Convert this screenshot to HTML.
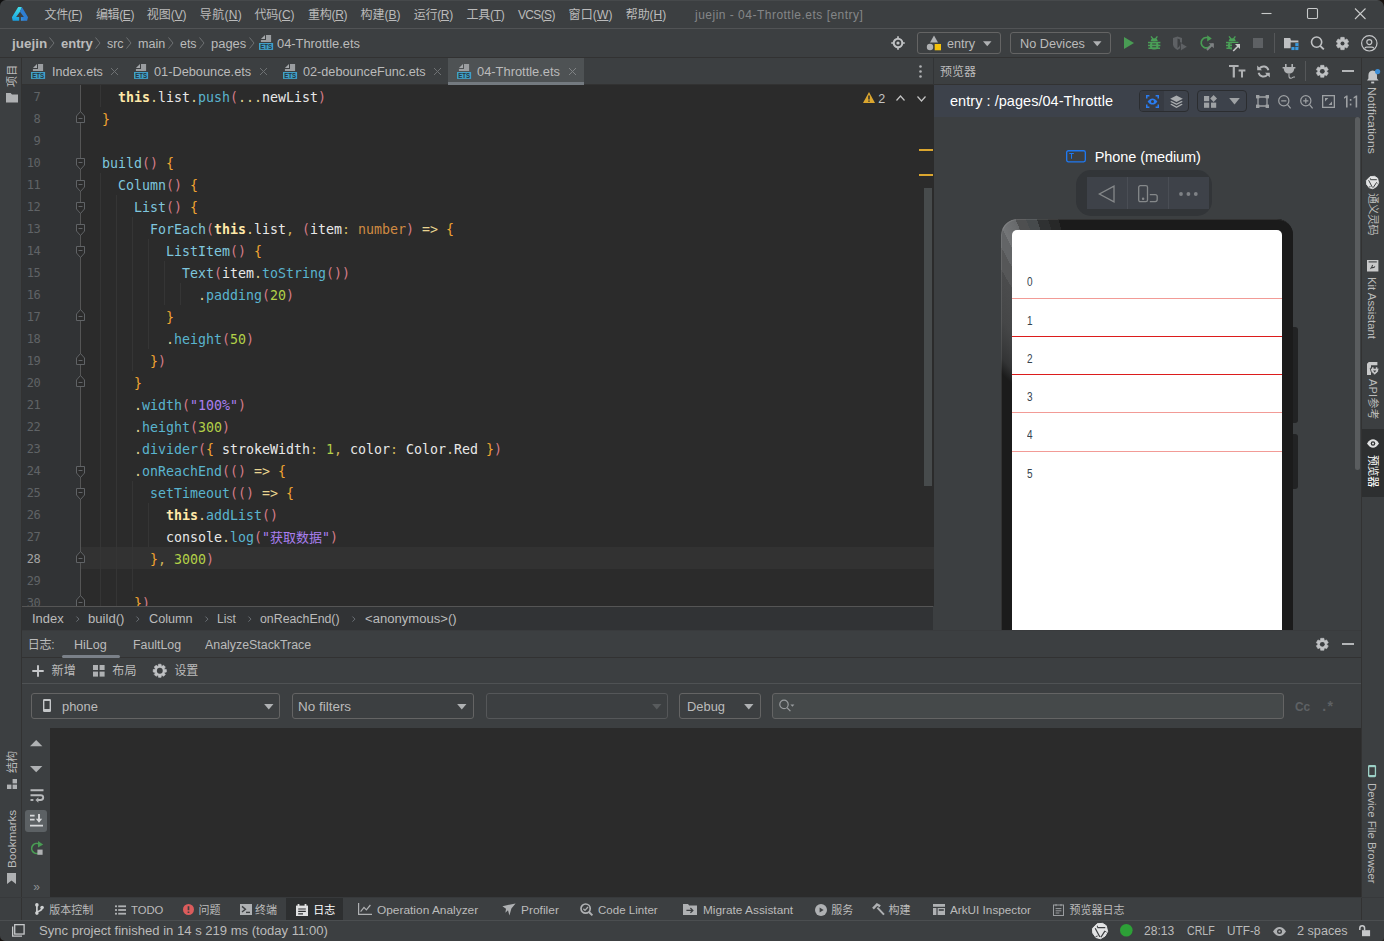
<!DOCTYPE html>
<html lang="zh-CN">
<head>
<meta charset="utf-8">
<title>juejin - 04-Throttle.ets [entry]</title>
<style>
*{box-sizing:border-box;margin:0;padding:0}
html,body{width:1384px;height:941px;overflow:hidden;background:#3c3f41}
body{position:relative;font-family:"Liberation Sans","Noto Sans CJK SC",sans-serif;font-size:12px;color:#bbbbbb;line-height:1}
.a{position:absolute}
.t{position:absolute;white-space:pre;line-height:16px;height:16px}
svg{position:absolute;overflow:visible}
u{text-decoration:underline;text-underline-offset:1px}
.ln{position:absolute;left:22px;width:18.4px;text-align:right;font-family:"DejaVu Sans Mono","Liberation Mono",monospace;font-size:12px;letter-spacing:-0.4px;line-height:22px;height:22px;color:#606366;white-space:pre}
.cl{position:absolute;left:86px;white-space:pre;font-family:"DejaVu Sans Mono","Liberation Mono","Noto Sans CJK SC",monospace;font-size:13.29px;line-height:22px;height:22px;color:#e8e8e8}
.k{color:#ffe8a8;font-weight:bold}.d{color:#ddd08c}.m{color:#5ab4cf}.p{color:#d47c88}.b{color:#f2a531}.n{color:#b2d048}.s{color:#a97ff0}.ty{color:#d08a42}.c{color:#7fc6de}.o{color:#cdb45a}.ar{color:#e8d590}
.combo{position:absolute;border:1px solid #646464;border-radius:3px;background:#3c3f41}
</style>
</head>
<body>
<div class="a" style="left:0px;top:28px;width:1384px;height:1px;background:#515355;"></div>
<div class="a" style="left:0px;top:57px;width:1384px;height:1px;background:#323232;"></div>
<div class="a" style="left:21px;top:58px;width:1px;height:862px;background:#323232;"></div>
<div class="a" style="left:1361px;top:58px;width:1px;height:862px;background:#323232;"></div>
<div class="a" style="left:22px;top:84px;width:912px;height:1px;background:#323232;"></div>
<div class="a" style="left:933px;top:58px;width:1px;height:27px;background:#323436;"></div>
<div class="a" style="left:22px;top:85px;width:912px;height:521px;background:#2b2b2b;"></div>
<div class="a" style="left:22px;top:85px;width:58px;height:521px;background:#313335;"></div>
<div class="a" style="left:22px;top:606px;width:911px;height:1px;background:#555555;"></div>
<div class="a" style="left:22px;top:630px;width:1339px;height:1px;background:#393b3d;"></div>
<div class="a" style="left:22px;top:657px;width:1339px;height:1px;background:#323232;"></div>
<div class="a" style="left:22px;top:683px;width:1339px;height:1px;background:#4f5254;"></div>
<div class="a" style="left:50px;top:728px;width:1311px;height:169px;background:#2b2b2b;"></div>
<div class="a" style="left:0px;top:897px;width:1384px;height:1px;background:#37393b;"></div>
<div class="a" style="left:0px;top:920px;width:1384px;height:1px;background:#4b4e50;"></div>
<svg style="left:0;top:0" width="40" height="28" viewBox="0 0 40 28"><defs><linearGradient id="lgA" x1="0" y1="0" x2="0" y2="1"><stop offset="0" stop-color="#43dfe8"/><stop offset="1" stop-color="#189fe0"/></linearGradient><linearGradient id="lgB" x1="1" y1="0" x2="0" y2="1"><stop offset="0" stop-color="#2c78cc"/><stop offset="0.7" stop-color="#2f80d6"/><stop offset="1" stop-color="#3ba0ec"/></linearGradient></defs><path d="M18.2 6.9L21.9 6.9L20 11.8L16.1 17L19.2 17L19.2 20.8L12.7 20.8L11.9 17.3Z" fill="url(#lgA)"/><path d="M21.9 6.9L28 17.3L27.1 20.8L20.9 20.8L20.9 17L23.9 17L20 11.8Z" fill="url(#lgB)"/></svg>
<span class="t" style="left:44.5px;top:6.5px;font-size:12px;letter-spacing:-0.33px;">文件(<u>F</u>)</span>
<span class="t" style="left:96px;top:6.5px;font-size:12px;letter-spacing:-0.38px;">编辑(<u>E</u>)</span>
<span class="t" style="left:146.7px;top:6.5px;font-size:12px;letter-spacing:-0.02px;">视图(<u>V</u>)</span>
<span class="t" style="left:199.8px;top:6.5px;font-size:12px;letter-spacing:0.33px;">导航(<u>N</u>)</span>
<span class="t" style="left:254.4px;top:6.5px;font-size:12px;letter-spacing:-0.17px;">代码(<u>C</u>)</span>
<span class="t" style="left:308px;top:6.5px;font-size:12px;letter-spacing:-0.29px;">重构(<u>R</u>)</span>
<span class="t" style="left:360.6px;top:6.5px;font-size:12px;">构建(<u>B</u>)</span>
<span class="t" style="left:413.8px;top:6.5px;font-size:12px;letter-spacing:-0.32px;">运行(<u>R</u>)</span>
<span class="t" style="left:466.4px;top:6.5px;font-size:12px;letter-spacing:-0.23px;">工具(<u>T</u>)</span>
<span class="t" style="left:518px;top:6.5px;font-size:12px;letter-spacing:-0.65px;">VCS(<u>S</u>)</span>
<span class="t" style="left:568.5px;top:6.5px;font-size:12px;letter-spacing:0.17px;">窗口(<u>W</u>)</span>
<span class="t" style="left:625.7px;top:6.5px;font-size:12px;letter-spacing:-0.04px;">帮助(<u>H</u>)</span>
<span class="t" style="left:695px;top:6.5px;font-size:12px;letter-spacing:0.49px;color:#848688;">juejin - 04-Throttle.ets [entry]</span>
<svg style="left:1261px;top:8px" width="110" height="12" viewBox="0 0 110 12" fill="none" stroke="#c8caca" stroke-width="1.1"><path d="M0.5 5.5h10"/><rect x="46.5" y="0.5" width="10" height="10" rx="1.2"/><path d="M94 0.5l10.5 10.5M104.5 0.5L94 11"/></svg>
<span class="t" style="left:11.5px;top:35.5px;transform-origin:0 0;transform:scaleX(1.123);font-size:12px;font-weight:bold;">juejin</span>
<svg style="left:49px;top:37px" width="6" height="12" viewBox="0 0 6 12" fill="none" stroke="#6e7173" stroke-width="1"><path d="M0.5 0.5L5 6L0.5 11.5"/></svg>
<span class="t" style="left:61px;top:35.5px;transform-origin:0 0;transform:scaleX(1.0837);font-size:12px;font-weight:bold;">entry</span>
<svg style="left:95px;top:37px" width="6" height="12" viewBox="0 0 6 12" fill="none" stroke="#6e7173" stroke-width="1"><path d="M0.5 0.5L5 6L0.5 11.5"/></svg>
<span class="t" style="left:107px;top:35.5px;transform-origin:0 0;transform:scaleX(1.0375);font-size:12px;">src</span>
<svg style="left:126px;top:37px" width="6" height="12" viewBox="0 0 6 12" fill="none" stroke="#6e7173" stroke-width="1"><path d="M0.5 0.5L5 6L0.5 11.5"/></svg>
<span class="t" style="left:138.4px;top:35.5px;transform-origin:0 0;transform:scaleX(1.0455);font-size:12px;">main</span>
<svg style="left:168px;top:37px" width="6" height="12" viewBox="0 0 6 12" fill="none" stroke="#6e7173" stroke-width="1"><path d="M0.5 0.5L5 6L0.5 11.5"/></svg>
<span class="t" style="left:180px;top:35.5px;transform-origin:0 0;transform:scaleX(1.0365);font-size:12px;">ets</span>
<svg style="left:199px;top:37px" width="6" height="12" viewBox="0 0 6 12" fill="none" stroke="#6e7173" stroke-width="1"><path d="M0.5 0.5L5 6L0.5 11.5"/></svg>
<span class="t" style="left:211px;top:35.5px;transform-origin:0 0;transform:scaleX(1.0794);font-size:12px;">pages</span>
<svg style="left:248.5px;top:37px" width="6" height="12" viewBox="0 0 6 12" fill="none" stroke="#6e7173" stroke-width="1"><path d="M0.5 0.5L5 6L0.5 11.5"/></svg>
<svg style="left:259px;top:35px" width="14.1" height="15" viewBox="0 0 14.1 15"><path d="M7 0H12.1V7H1.9V5H7Z" fill="#9a9da0"/><path d="M6 0V4.1H1.9Z" fill="#a4a7aa"/><rect x="0" y="8" width="14.1" height="6.9" fill="#40a0c8"/><text x="1.2" y="13.8" font-family="Liberation Sans,sans-serif" font-size="6.3" font-weight="bold" fill="#263640" textLength="11.9" lengthAdjust="spacingAndGlyphs">ETS</text></svg>
<span class="t" style="left:277.3px;top:35.5px;transform-origin:0 0;transform:scaleX(1.0714);font-size:12px;">04-Throttle.ets</span>
<svg style="left:891px;top:36px" width="14" height="14" viewBox="0 0 14 14" fill="none" stroke="#bfc1c3"><circle cx="7" cy="7" r="4.3" stroke-width="2.1"/><circle cx="7" cy="7" r="1.6" fill="#bfc1c3" stroke="none"/><path d="M7 0.2v2.6M7 11.2V13.8M0.2 7h2.6M11.2 7H13.8" stroke-width="1.7"/></svg>
<div class="combo" style="left:917px;top:32px;width:84px;height:22px"></div>
<svg style="left:926px;top:35px" width="16" height="16" viewBox="0 0 16 16"><path d="M8 0.4L12 7.4H4Z" fill="#afb1b3"/><circle cx="4" cy="12" r="3.2" fill="#afb1b3"/><rect x="8.7" y="9" width="6.3" height="6.3" fill="#f4c20d"/></svg>
<span class="t" style="left:946.6px;top:35.5px;transform-origin:0 0;transform:scaleX(1.0529);font-size:12px;">entry</span>
<svg style="left:983px;top:40.8px" width="8.5" height="5.4" viewBox="0 0 10 6"><path d="M0 0H10L5 6Z" fill="#afb1b3"/></svg>
<div class="combo" style="left:1010px;top:32px;width:101px;height:22px"></div>
<span class="t" style="left:1019.6px;top:35.5px;transform-origin:0 0;transform:scaleX(1.0577);font-size:12px;">No Devices</span>
<svg style="left:1093px;top:40.8px" width="8.5" height="5.4" viewBox="0 0 10 6"><path d="M0 0H10L5 6Z" fill="#afb1b3"/></svg>
<svg style="left:1124px;top:37px" width="10" height="12" viewBox="0 0 10 12"><path d="M0 0L10 6L0 12Z" fill="#499c54"/></svg>
<svg style="left:1147.7px;top:36px" width="12.4" height="13.6" viewBox="0 0 12.4 13.6" fill="#4a9f57" stroke="none"><path d="M3 0.4L5 3M9.4 0.4L7.4 3" stroke="#4a9f57" stroke-width="1.3" fill="none"/><path d="M2.7 5.2A3.5 3 0 0 1 9.7 5.2Z"/><rect x="1.9" y="5.7" width="8.6" height="7.9" rx="3.6"/><rect x="0" y="5.8" width="12.4" height="1.5"/><rect x="0" y="8.7" width="12.4" height="1.5"/><rect x="0.4" y="11.5" width="11.6" height="1.5"/><path d="M4.2 7.95H8.2M4.2 10.8H8.2" stroke="#3c3f41" stroke-width="1.1" fill="none"/></svg>
<svg style="left:1172px;top:36px" width="16" height="15" viewBox="0 0 16 15"><path d="M1 2L5.5 0.5L10 2V8.5C10 11 7.5 13 5.5 14C3.5 13 1 11 1 8.5Z" fill="#5e6164"/><path d="M5.5 2.5L8 3.4V8.5C8 10 6.8 11.2 5.5 12Z" fill="#3c3f41"/><path d="M8.5 6.5L15.5 10.7L8.5 15Z" fill="#5e6164" stroke="#3c3f41" stroke-width="0.8"/></svg>
<svg style="left:1198.5px;top:35px" width="16" height="16" viewBox="0 0 16 16" fill="none"><path d="M11.2 4.2A5.2 5.2 0 1 0 12.2 9.6" stroke="#499c54" stroke-width="1.7"/><path d="M8.2 0.2L12.8 3.6L8.2 6.6Z" fill="#499c54"/><path d="M8 15L14 9" stroke="#7e8183" stroke-width="1.8"/><path d="M9.8 8.2H14.8V13.2Z" fill="#7e8183"/></svg>
<svg style="left:1225.8px;top:36px" width="12.4" height="13.6" viewBox="0 0 12.4 13.6" fill="#4a9f57" stroke="none"><path d="M3 0.4L5 3M9.4 0.4L7.4 3" stroke="#4a9f57" stroke-width="1.3" fill="none"/><path d="M2.7 5.2A3.5 3 0 0 1 9.7 5.2Z"/><rect x="1.9" y="5.7" width="8.6" height="7.9" rx="3.6"/><rect x="0" y="5.8" width="12.4" height="1.5"/><rect x="0" y="8.7" width="12.4" height="1.5"/><rect x="0.4" y="11.5" width="11.6" height="1.5"/><path d="M4.2 7.95H8.2M4.2 10.8H8.2" stroke="#3c3f41" stroke-width="1.1" fill="none"/></svg>
<svg style="left:1232px;top:43px" width="9" height="9" viewBox="0 0 9 9"><rect x="0" y="0" width="9" height="9" fill="#3c3f41"/><path d="M1.2 8L7 2.2" stroke="#c8c9ca" stroke-width="1.6"/><path d="M3 1H8V6Z" fill="#c8c9ca"/></svg>
<div class="a" style="left:1253px;top:38px;width:10.4px;height:10.2px;background:#5e6164;"></div>
<div class="a" style="left:1274px;top:33px;width:1px;height:20px;background:#555759;"></div>
<svg style="left:1283.8px;top:37.8px" width="14.6" height="12.2" viewBox="0 0 14.6 12.2"><path d="M0 0H6.2L7 2.4H14.4V10.2H0Z" fill="#bfc1c3"/><rect x="6.6" y="4.4" width="8" height="8" fill="#3c3f41"/><rect x="11.3" y="5.1" width="3.1" height="3.1" fill="#3a9ae0"/><rect x="7.4" y="9" width="3.1" height="3.1" fill="#3a9ae0"/><rect x="11.3" y="9" width="3.1" height="3.1" fill="#3a9ae0"/></svg>
<svg style="left:1310px;top:36px" width="15" height="15" viewBox="0 0 15 15" fill="none" stroke="#bfc1c3"><circle cx="6.6" cy="6.1" r="5.1" stroke-width="1.6"/><path d="M10.2 9.8L13.8 13.4" stroke-width="1.9"/></svg>
<svg style="left:1336.4px;top:36.6px" width="13" height="13" viewBox="-6.5 -6.5 13 13"><path d="M-1.92 -4.29L-1.71 -6.17L1.71 -6.17L1.92 -4.29L2.76 -3.81L4.49 -4.56L6.20 -1.61L4.67 -0.49L4.67 0.49L6.20 1.61L4.49 4.56L2.76 3.81L1.92 4.29L1.71 6.17L-1.71 6.17L-1.92 4.29L-2.76 3.81L-4.49 4.56L-6.20 1.61L-4.67 0.49L-4.67 -0.49L-6.20 -1.61L-4.49 -4.56L-2.76 -3.81Z" fill="#bfc1c3" stroke="#bfc1c3" stroke-width="0.6" stroke-linejoin="round"/><circle r="2" fill="#3c3f41"/></svg>
<svg style="left:1360.6px;top:34.6px" width="16.6" height="16.6" viewBox="0 0 16.6 16.6" fill="none" stroke="#c4c6c8" stroke-width="1.2"><circle cx="8.3" cy="8.3" r="7.7"/><circle cx="8.3" cy="7.1" r="2.5"/><path d="M3.9 13.6C3.9 12.4 4.8 12.1 5.6 12.1H11C11.8 12.1 12.7 12.4 12.7 13.6"/></svg>
<div class="a" style="left:448px;top:58px;width:136px;height:27px;background:#4e5254;"></div>
<div class="a" style="left:448px;top:82px;width:136px;height:3px;background:#747a80;"></div>
<svg style="left:31px;top:64px" width="14.1" height="15" viewBox="0 0 14.1 15"><path d="M7 0H12.1V7H1.9V5H7Z" fill="#9a9da0"/><path d="M6 0V4.1H1.9Z" fill="#a4a7aa"/><rect x="0" y="8" width="14.1" height="6.9" fill="#40a0c8"/><text x="1.2" y="13.8" font-family="Liberation Sans,sans-serif" font-size="6.3" font-weight="bold" fill="#263640" textLength="11.9" lengthAdjust="spacingAndGlyphs">ETS</text></svg>
<span class="t" style="left:51.7px;top:63.5px;transform-origin:0 0;transform:scaleX(1.0451);font-size:12px;">Index.ets</span>
<svg style="left:111px;top:68px" width="7" height="7" viewBox="0 0 7 7" stroke="#6e7173" stroke-width="1" fill="none"><path d="M0 0L7 7M7 0L0 7"/></svg>
<svg style="left:134px;top:64px" width="14.1" height="15" viewBox="0 0 14.1 15"><path d="M7 0H12.1V7H1.9V5H7Z" fill="#9a9da0"/><path d="M6 0V4.1H1.9Z" fill="#a4a7aa"/><rect x="0" y="8" width="14.1" height="6.9" fill="#40a0c8"/><text x="1.2" y="13.8" font-family="Liberation Sans,sans-serif" font-size="6.3" font-weight="bold" fill="#263640" textLength="11.9" lengthAdjust="spacingAndGlyphs">ETS</text></svg>
<span class="t" style="left:154.2px;top:63.5px;transform-origin:0 0;transform:scaleX(1.0634);font-size:12px;">01-Debounce.ets</span>
<svg style="left:259.5px;top:68px" width="7" height="7" viewBox="0 0 7 7" stroke="#6e7173" stroke-width="1" fill="none"><path d="M0 0L7 7M7 0L0 7"/></svg>
<svg style="left:283px;top:64px" width="14.1" height="15" viewBox="0 0 14.1 15"><path d="M7 0H12.1V7H1.9V5H7Z" fill="#9a9da0"/><path d="M6 0V4.1H1.9Z" fill="#a4a7aa"/><rect x="0" y="8" width="14.1" height="6.9" fill="#40a0c8"/><text x="1.2" y="13.8" font-family="Liberation Sans,sans-serif" font-size="6.3" font-weight="bold" fill="#263640" textLength="11.9" lengthAdjust="spacingAndGlyphs">ETS</text></svg>
<span class="t" style="left:303.1px;top:63.5px;transform-origin:0 0;transform:scaleX(1.056);font-size:12px;">02-debounceFunc.ets</span>
<svg style="left:433.5px;top:68px" width="7" height="7" viewBox="0 0 7 7" stroke="#6e7173" stroke-width="1" fill="none"><path d="M0 0L7 7M7 0L0 7"/></svg>
<svg style="left:457px;top:64px" width="14.1" height="15" viewBox="0 0 14.1 15"><path d="M7 0H12.1V7H1.9V5H7Z" fill="#9a9da0"/><path d="M6 0V4.1H1.9Z" fill="#a4a7aa"/><rect x="0" y="8" width="14.1" height="6.9" fill="#40a0c8"/><text x="1.2" y="13.8" font-family="Liberation Sans,sans-serif" font-size="6.3" font-weight="bold" fill="#263640" textLength="11.9" lengthAdjust="spacingAndGlyphs">ETS</text></svg>
<span class="t" style="left:477.2px;top:63.5px;transform-origin:0 0;transform:scaleX(1.0727);font-size:12px;">04-Throttle.ets</span>
<svg style="left:569px;top:68px" width="7" height="7" viewBox="0 0 7 7" stroke="#7f8284" stroke-width="1" fill="none"><path d="M0 0L7 7M7 0L0 7"/></svg>
<svg style="left:919px;top:65px" width="3" height="13" viewBox="0 0 3 13" fill="#afb1b3"><circle cx="1.5" cy="1.5" r="1.3"/><circle cx="1.5" cy="6.5" r="1.3"/><circle cx="1.5" cy="11.5" r="1.3"/></svg>
<div class="a" style="left:0;top:0;width:934px;height:606px;overflow:hidden">
<div class="a" style="left:80px;top:547px;width:854px;height:22px;background:#323232;"></div>
<div class="a" style="left:80px;top:85px;width:1px;height:521px;background:#555555;"></div>
<div class="a" style="left:100px;top:85px;width:1px;height:22px;background:#353535;"></div>
<div class="a" style="left:100px;top:173px;width:1px;height:440px;background:#353535;"></div>
<div class="a" style="left:116px;top:195px;width:1px;height:418px;background:#353535;"></div>
<div class="a" style="left:132px;top:217px;width:1px;height:154px;background:#353535;"></div>
<div class="a" style="left:132px;top:481px;width:1px;height:110px;background:#353535;"></div>
<div class="a" style="left:148px;top:239px;width:1px;height:110px;background:#353535;"></div>
<div class="a" style="left:164px;top:261px;width:1px;height:44px;background:#353535;"></div>
<div class="a" style="left:180px;top:283px;width:1px;height:22px;background:#353535;"></div>
<div class="a" style="left:148px;top:503px;width:1px;height:44px;background:#353535;"></div>
<div class="ln" style="top:86px;color:#606366">7</div>
<div class="ln" style="top:108px;color:#606366">8</div>
<div class="ln" style="top:130px;color:#606366">9</div>
<div class="ln" style="top:152px;color:#606366">10</div>
<div class="ln" style="top:174px;color:#606366">11</div>
<div class="ln" style="top:196px;color:#606366">12</div>
<div class="ln" style="top:218px;color:#606366">13</div>
<div class="ln" style="top:240px;color:#606366">14</div>
<div class="ln" style="top:262px;color:#606366">15</div>
<div class="ln" style="top:284px;color:#606366">16</div>
<div class="ln" style="top:306px;color:#606366">17</div>
<div class="ln" style="top:328px;color:#606366">18</div>
<div class="ln" style="top:350px;color:#606366">19</div>
<div class="ln" style="top:372px;color:#606366">20</div>
<div class="ln" style="top:394px;color:#606366">21</div>
<div class="ln" style="top:416px;color:#606366">22</div>
<div class="ln" style="top:438px;color:#606366">23</div>
<div class="ln" style="top:460px;color:#606366">24</div>
<div class="ln" style="top:482px;color:#606366">25</div>
<div class="ln" style="top:504px;color:#606366">26</div>
<div class="ln" style="top:526px;color:#606366">27</div>
<div class="ln" style="top:548px;color:#a4a3a3">28</div>
<div class="ln" style="top:570px;color:#606366">29</div>
<div class="ln" style="top:592px;color:#606366">30</div>
<div class="cl" style="top:87px">    <span class="k">this</span><span class="d">.</span>list<span class="d">.</span><span class="m">push</span><span class="p">(</span><span class="d">...</span>newList<span class="p">)</span></div>
<div class="cl" style="top:109px">  <span class="b">}</span></div>
<div class="cl" style="top:153px">  <span class="c">build</span><span class="p">()</span> <span class="b">{</span></div>
<div class="cl" style="top:175px">    <span class="c">Column</span><span class="p">()</span> <span class="b">{</span></div>
<div class="cl" style="top:197px">      <span class="c">List</span><span class="p">()</span> <span class="b">{</span></div>
<div class="cl" style="top:219px">        <span class="c">ForEach</span><span class="p">(</span><span class="k">this</span><span class="d">.</span>list<span class="o">,</span> <span class="p">(</span>item<span class="o">:</span> <span class="ty">number</span><span class="p">)</span> <span class="ar">=&gt;</span> <span class="b">{</span></div>
<div class="cl" style="top:241px">          <span class="c">ListItem</span><span class="p">()</span> <span class="b">{</span></div>
<div class="cl" style="top:263px">            <span class="c">Text</span><span class="p">(</span>item<span class="d">.</span><span class="m">toString</span><span class="p">())</span></div>
<div class="cl" style="top:285px">              <span class="d">.</span><span class="m">padding</span><span class="p">(</span><span class="n">20</span><span class="p">)</span></div>
<div class="cl" style="top:307px">          <span class="b">}</span></div>
<div class="cl" style="top:329px">          <span class="d">.</span><span class="m">height</span><span class="p">(</span><span class="n">50</span><span class="p">)</span></div>
<div class="cl" style="top:351px">        <span class="b">}</span><span class="p">)</span></div>
<div class="cl" style="top:373px">      <span class="b">}</span></div>
<div class="cl" style="top:395px">      <span class="d">.</span><span class="m">width</span><span class="p">(</span><span class="s">&quot;100%&quot;</span><span class="p">)</span></div>
<div class="cl" style="top:417px">      <span class="d">.</span><span class="m">height</span><span class="p">(</span><span class="n">300</span><span class="p">)</span></div>
<div class="cl" style="top:439px">      <span class="d">.</span><span class="m">divider</span><span class="p">(</span><span class="b">{</span> strokeWidth<span class="o">:</span> <span class="n">1</span><span class="o">,</span> color<span class="o">:</span> Color<span class="d">.</span>Red <span class="b">}</span><span class="p">)</span></div>
<div class="cl" style="top:461px">      <span class="d">.</span><span class="m">onReachEnd</span><span class="p">(()</span> <span class="ar">=&gt;</span> <span class="b">{</span></div>
<div class="cl" style="top:483px">        <span class="m">setTimeout</span><span class="p">(()</span> <span class="ar">=&gt;</span> <span class="b">{</span></div>
<div class="cl" style="top:505px">          <span class="k">this</span><span class="d">.</span><span class="m">addList</span><span class="p">()</span></div>
<div class="cl" style="top:527px">          console<span class="d">.</span><span class="m">log</span><span class="p">(</span><span class="s">&quot;</span><span class="s" style="font-size:13px">获取数据</span><span class="s">&quot;</span><span class="p">)</span></div>
<div class="cl" style="top:549px">        <span class="b">}</span><span class="o">,</span> <span class="n">3000</span><span class="p">)</span></div>
<div class="cl" style="top:593px">      <span class="b">}</span><span class="p">)</span></div>
<svg style="left:76px;top:158px" width="9" height="12" viewBox="0 0 9 12"><path d="M0.5 0.5H8.5V7L4.5 11.5L0.5 7Z" fill="#2b2b2b" stroke="#606366"/><path d="M2.5 4.5H6.5" stroke="#606366"/></svg>
<svg style="left:76px;top:180px" width="9" height="12" viewBox="0 0 9 12"><path d="M0.5 0.5H8.5V7L4.5 11.5L0.5 7Z" fill="#2b2b2b" stroke="#606366"/><path d="M2.5 4.5H6.5" stroke="#606366"/></svg>
<svg style="left:76px;top:202px" width="9" height="12" viewBox="0 0 9 12"><path d="M0.5 0.5H8.5V7L4.5 11.5L0.5 7Z" fill="#2b2b2b" stroke="#606366"/><path d="M2.5 4.5H6.5" stroke="#606366"/></svg>
<svg style="left:76px;top:224px" width="9" height="12" viewBox="0 0 9 12"><path d="M0.5 0.5H8.5V7L4.5 11.5L0.5 7Z" fill="#2b2b2b" stroke="#606366"/><path d="M2.5 4.5H6.5" stroke="#606366"/></svg>
<svg style="left:76px;top:246px" width="9" height="12" viewBox="0 0 9 12"><path d="M0.5 0.5H8.5V7L4.5 11.5L0.5 7Z" fill="#2b2b2b" stroke="#606366"/><path d="M2.5 4.5H6.5" stroke="#606366"/></svg>
<svg style="left:76px;top:466px" width="9" height="12" viewBox="0 0 9 12"><path d="M0.5 0.5H8.5V7L4.5 11.5L0.5 7Z" fill="#2b2b2b" stroke="#606366"/><path d="M2.5 4.5H6.5" stroke="#606366"/></svg>
<svg style="left:76px;top:488px" width="9" height="12" viewBox="0 0 9 12"><path d="M0.5 0.5H8.5V7L4.5 11.5L0.5 7Z" fill="#2b2b2b" stroke="#606366"/><path d="M2.5 4.5H6.5" stroke="#606366"/></svg>
<svg style="left:76px;top:110.6px" width="9" height="12" viewBox="0 0 9 12"><path d="M0.5 11.5H8.5V5L4.5 0.5L0.5 5Z" fill="#2b2b2b" stroke="#606366"/><path d="M2.5 7.5H6.5" stroke="#606366"/></svg>
<svg style="left:76px;top:308.6px" width="9" height="12" viewBox="0 0 9 12"><path d="M0.5 11.5H8.5V5L4.5 0.5L0.5 5Z" fill="#2b2b2b" stroke="#606366"/><path d="M2.5 7.5H6.5" stroke="#606366"/></svg>
<svg style="left:76px;top:352.6px" width="9" height="12" viewBox="0 0 9 12"><path d="M0.5 11.5H8.5V5L4.5 0.5L0.5 5Z" fill="#2b2b2b" stroke="#606366"/><path d="M2.5 7.5H6.5" stroke="#606366"/></svg>
<svg style="left:76px;top:374.6px" width="9" height="12" viewBox="0 0 9 12"><path d="M0.5 11.5H8.5V5L4.5 0.5L0.5 5Z" fill="#2b2b2b" stroke="#606366"/><path d="M2.5 7.5H6.5" stroke="#606366"/></svg>
<svg style="left:76px;top:550.6px" width="9" height="12" viewBox="0 0 9 12"><path d="M0.5 11.5H8.5V5L4.5 0.5L0.5 5Z" fill="#2b2b2b" stroke="#606366"/><path d="M2.5 7.5H6.5" stroke="#606366"/></svg>
<svg style="left:76px;top:594.6px" width="9" height="12" viewBox="0 0 9 12"><path d="M0.5 11.5H8.5V5L4.5 0.5L0.5 5Z" fill="#2b2b2b" stroke="#606366"/><path d="M2.5 7.5H6.5" stroke="#606366"/></svg>
</div>
<svg style="left:863px;top:92px" width="12" height="11" viewBox="0 0 12 11"><path d="M6 0L12 11H0Z" fill="#dba62f"/><path d="M6 3.6V7.4M6 8.4V9.8" stroke="#2b2b2b" stroke-width="1.5"/></svg>
<span class="t" style="left:878.3px;top:91px;font-size:12.5px;color:#c4c4c4;">2</span>
<svg style="left:896px;top:95px" width="9" height="6" viewBox="0 0 9 6" fill="none" stroke="#c4c4c4" stroke-width="1.2"><path d="M0.5 5.5L4.5 1L8.5 5.5"/></svg>
<svg style="left:917px;top:96px" width="9" height="6" viewBox="0 0 9 6" fill="none" stroke="#c4c4c4" stroke-width="1.2"><path d="M0.5 0.5L4.5 5L8.5 0.5"/></svg>
<div class="a" style="left:919px;top:149px;width:14px;height:2px;background:#dba62f;"></div>
<div class="a" style="left:919px;top:174px;width:14px;height:2px;background:#dba62f;"></div>
<div class="a" style="left:924px;top:188px;width:8px;height:298px;background:#474b4c;"></div>
<div class="a" style="left:22px;top:607px;width:911px;height:23px;background:#313335;"></div>
<span class="t" style="left:32.3px;top:610.5px;transform-origin:0 0;transform:scaleX(1.0763);font-size:12px;">Index</span>
<span class="t" style="left:88.3px;top:610.5px;transform-origin:0 0;transform:scaleX(1.0911);font-size:12px;">build()</span>
<span class="t" style="left:149.1px;top:610.5px;transform-origin:0 0;transform:scaleX(1.0542);font-size:12px;">Column</span>
<span class="t" style="left:217.1px;top:610.5px;transform-origin:0 0;transform:scaleX(1.006);font-size:12px;">List</span>
<span class="t" style="left:260px;top:610.5px;transform-origin:0 0;transform:scaleX(1.0285);font-size:12px;">onReachEnd()</span>
<span class="t" style="left:365.1px;top:610.5px;transform-origin:0 0;transform:scaleX(1.0911);font-size:12px;">&lt;anonymous&gt;()</span>
<svg style="left:75.5px;top:615.9px" width="3.4" height="6.2" viewBox="0 0 4 7" fill="none" stroke="#6e7378" stroke-width="1.1"><path d="M0.5 0.5L3.5 3.5L0.5 6.5"/></svg>
<svg style="left:136.4px;top:615.9px" width="3.4" height="6.2" viewBox="0 0 4 7" fill="none" stroke="#6e7378" stroke-width="1.1"><path d="M0.5 0.5L3.5 3.5L0.5 6.5"/></svg>
<svg style="left:204.7px;top:615.9px" width="3.4" height="6.2" viewBox="0 0 4 7" fill="none" stroke="#6e7378" stroke-width="1.1"><path d="M0.5 0.5L3.5 3.5L0.5 6.5"/></svg>
<svg style="left:247.5px;top:615.9px" width="3.4" height="6.2" viewBox="0 0 4 7" fill="none" stroke="#6e7378" stroke-width="1.1"><path d="M0.5 0.5L3.5 3.5L0.5 6.5"/></svg>
<svg style="left:351.6px;top:615.9px" width="3.4" height="6.2" viewBox="0 0 4 7" fill="none" stroke="#6e7378" stroke-width="1.1"><path d="M0.5 0.5L3.5 3.5L0.5 6.5"/></svg>
<div class="a" style="left:934px;top:84px;width:427px;height:1px;background:#323232;"></div>
<span class="t" style="left:940px;top:63.5px;font-size:12px;letter-spacing:-0.01px;">预览器</span>
<svg style="left:1229px;top:65px" width="17" height="13" viewBox="0 0 17 13" fill="#afb1b3"><path d="M0 0H9.6V2H5.9V12.6H3.7V2H0Z"/><path d="M9.6 4.6H16.4V6.4H14V12.6H12V6.4H9.6Z"/></svg>
<svg style="left:1257px;top:65px" width="13" height="13" viewBox="0 0 13 13" fill="none" stroke="#b4b6b8" stroke-width="1.9"><path d="M11.4 5.2A5 5 0 0 0 2.6 3.4"/><path d="M1.6 7.8A5 5 0 0 0 10.4 9.6"/><path d="M0.2 0.4V5.2H5Z" fill="#b4b6b8" stroke="none"/><path d="M12.8 12.6V7.8H8Z" fill="#b4b6b8" stroke="none"/></svg>
<svg style="left:1282px;top:64px" width="14" height="15" viewBox="0 0 14 15" fill="#afb1b3"><path d="M3 0H4.6V3H3ZM9.4 0H11V3H9.4Z"/><path d="M0.6 3H13.4V4.6H12.2C12.2 7.6 10.2 9.6 7 9.6C3.8 9.6 1.8 7.6 1.8 4.6H0.6Z"/><path d="M7 9.4V12.2C7 13.6 8 14.2 9 14.2C10.2 14.2 10.6 13 11.6 13H13" fill="none" stroke="#afb1b3" stroke-width="1.1"/></svg>
<div class="a" style="left:1305px;top:61px;width:1px;height:20px;background:#555759;"></div>
<svg style="left:1315.6px;top:65.2px" width="12.6" height="12.6" viewBox="-6.5 -6.5 13 13"><path d="M-1.92 -4.29L-1.71 -6.17L1.71 -6.17L1.92 -4.29L2.76 -3.81L4.49 -4.56L6.20 -1.61L4.67 -0.49L4.67 0.49L6.20 1.61L4.49 4.56L2.76 3.81L1.92 4.29L1.71 6.17L-1.71 6.17L-1.92 4.29L-2.76 3.81L-4.49 4.56L-6.20 1.61L-4.67 0.49L-4.67 -0.49L-6.20 -1.61L-4.49 -4.56L-2.76 -3.81Z" fill="#bfc1c3" stroke="#bfc1c3" stroke-width="0.6" stroke-linejoin="round"/><circle r="2.5" fill="#3c3f41"/></svg>
<div class="a" style="left:1341.6px;top:70px;width:12.8px;height:2px;background:#b4b6b8;"></div>
<div class="a" style="left:934px;top:85px;width:427px;height:32px;background:#3d424b;"></div>
<span class="t" style="left:950px;top:92.5px;font-size:14.5px;letter-spacing:0.04px;color:#ffffff;">entry : /pages/04-Throttle</span>
<div class="a" style="left:1139px;top:90px;width:50px;height:22px;border:1px solid #2b2d30;border-radius:4px;background:#3d424b;overflow:hidden"><div class="a" style="left:0;top:0;width:24px;height:20px;background:#373b43"></div></div>
<svg style="left:1146px;top:94.5px" width="13" height="13" viewBox="0 0 13 13" fill="none" stroke="#2a7cf0" stroke-width="1.5"><path d="M0.75 3.4V0.75H3.4M9.6 0.75H12.25V3.4M12.25 9.6V12.25H9.6M3.4 12.25H0.75V9.6"/><path d="M1.6 6.5C3.2 4.2 4.8 3.4 6.5 3.4C8.2 3.4 9.8 4.2 11.4 6.5C9.8 8.8 8.2 9.6 6.5 9.6C4.8 9.6 3.2 8.8 1.6 6.5Z" fill="#2a7cf0" stroke="none"/><circle cx="6.5" cy="6.5" r="1.5" fill="#373b43" stroke="none"/></svg>
<svg style="left:1169.5px;top:94.5px" width="13" height="13" viewBox="0 0 13 13" fill="#a9acae"><path d="M6.5 0.5L12.8 3.8L6.5 7.1L0.2 3.8Z"/><path d="M1.6 6L0.2 6.8L6.5 10.1L12.8 6.8L11.4 6L6.5 8.6Z"/><path d="M1.6 8.8L0.2 9.6L6.5 12.9L12.8 9.6L11.4 8.8L6.5 11.4Z"/></svg>
<div class="a" style="left:1197px;top:90px;width:50px;height:22px;border:1px solid #2b2d30;border-radius:4px;background:#3d424b"></div>
<svg style="left:1203.5px;top:94.5px" width="13" height="13" viewBox="0 0 13 13" fill="#9ea1a4"><rect x="0" y="1" width="5.2" height="5.2"/><rect x="0" y="7.6" width="5.2" height="5.2"/><rect x="7" y="7.6" width="5.2" height="5.2"/><path d="M9.6 0L13 3.5L9.6 7L6.2 3.5Z"/></svg>
<svg style="left:1228.7px;top:98.4px" width="11" height="6.4" viewBox="0 0 10 6"><path d="M0 0H10L5 6Z" fill="#9ea1a4"/></svg>
<svg style="left:1255.5px;top:94.5px" width="13" height="13" viewBox="0 0 13 13" fill="#9ea1a4"><path d="M2 2H11V11H2Z" fill="none" stroke="#9ea1a4" stroke-width="1.3"/><rect x="0" y="0" width="3.4" height="3.4"/><rect x="9.6" y="0" width="3.4" height="3.4"/><rect x="0" y="9.6" width="3.4" height="3.4"/><rect x="9.6" y="9.6" width="3.4" height="3.4"/></svg>
<svg style="left:1277.5px;top:94.5px" width="13" height="14" viewBox="0 0 13 14" fill="none" stroke="#9ea1a4" stroke-width="1.2"><circle cx="5.8" cy="5.8" r="5.1"/><path d="M3.2 5.8H8.4M9.6 9.6L12.6 13.4"/></svg>
<svg style="left:1299.5px;top:94.5px" width="13" height="14" viewBox="0 0 13 14" fill="none" stroke="#9ea1a4" stroke-width="1.2"><circle cx="5.8" cy="5.8" r="5.1"/><path d="M3.2 5.8H8.4M5.8 3.2V8.4M9.6 9.6L12.6 13.4"/></svg>
<svg style="left:1321.5px;top:94.5px" width="13" height="13" viewBox="0 0 13 13"><rect x="0.65" y="0.65" width="11.7" height="11.7" fill="none" stroke="#9ea1a4" stroke-width="1.3"/><path d="M3 3H6.4L3 6.4Z" fill="#9ea1a4"/><path d="M10 10H6.6L10 6.6Z" fill="#9ea1a4"/></svg>
<svg style="left:1344px;top:94.5px" width="13" height="13" viewBox="0 0 13 13" fill="#9ea1a4"><path d="M0 2.2L2.4 0.6H3.6V12.6H2V2.6L0 3.8Z"/><path d="M9.6 2.2L12 0.6H13.2V12.6H11.6V2.6L9.6 3.8Z"/><rect x="5.8" y="4" width="1.6" height="1.8"/><rect x="5.8" y="8.6" width="1.6" height="1.8"/></svg>
<div class="a" style="left:1354.5px;top:117px;width:5.5px;height:353px;background:#5a5d5f;border-radius:3px"></div>
<svg style="left:1066px;top:150.3px" width="20" height="12.6" viewBox="0 0 21 13" fill="none" stroke="#1f78f0" stroke-width="1.4"><rect x="0.7" y="0.7" width="19.6" height="11.6" rx="1.8"/><path d="M3.4 3.6H8.2M5.8 3.6V9.2" stroke-width="1.1"/></svg>
<span class="t" style="left:1094.7px;top:149px;font-size:14.5px;letter-spacing:-0.08px;color:#ffffff;">Phone (medium)</span>
<div class="a" style="left:1076px;top:170.3px;width:135.5px;height:45.5px;background:#323538;border-radius:15px"></div>
<div class="a" style="left:1086.5px;top:176.7px;width:122.5px;height:32.4px;background:#3e4249"></div>
<div class="a" style="left:1127px;top:176.7px;width:1px;height:32.4px;background:#4a4e55;"></div>
<div class="a" style="left:1168.3px;top:176.7px;width:1px;height:32.4px;background:#4a4e55;"></div>
<svg style="left:1098px;top:185px" width="17" height="18" viewBox="0 0 17 18" fill="none" stroke="#85888a" stroke-width="1.3"><path d="M16 1.2V16.8L1.4 9Z"/></svg>
<svg style="left:1137.5px;top:184.5px" width="20" height="18" viewBox="0 0 20 18" fill="none" stroke="#85888a" stroke-width="1.3"><rect x="0.7" y="0.7" width="8.8" height="16" rx="1.6"/><circle cx="5.1" cy="13.8" r="0.6" fill="#85888a"/><path d="M11.8 9.6H17.2C18.4 9.6 19.2 10.4 19.2 11.6V14.6C19.2 15.8 18.4 16.6 17.2 16.6H11.8"/></svg>
<svg style="left:1178.5px;top:191.5px" width="20" height="4" viewBox="0 0 20 4" fill="#7f8286"><circle cx="2" cy="2" r="1.9"/><circle cx="9.4" cy="2" r="1.9"/><circle cx="16.8" cy="2" r="1.9"/></svg>
<div class="a" style="left:934px;top:117px;width:420px;height:513px;overflow:hidden">
<div class="a" style="left:67px;top:102px;width:292px;height:600px;border-radius:16px;background:#1b1b1b;overflow:hidden"><div class="a" style="left:0;top:0;width:292px;height:600px;background:conic-gradient(from -50deg at 146px 300px,#1b1b1b 0deg,#1b1b1b 5deg,#333435 8deg,#454647 14deg,#4b4c4d 19.7deg,#565758 19.7deg,#565758 21.8deg,#636567 21.8deg,#636567 23.5deg,#747678 23.5deg,#67696b 26.3deg,#4e4f50 26.3deg,#4e4f50 28deg,#464a4c 28deg,#464a4c 29.8deg,#2f3132 29.8deg,#2f3132 31.7deg,#272828 31.7deg,#272828 33.5deg,#1b1b1b 33.5deg,#1b1b1b 360deg)"></div><div class="a" style="left:0;top:0;width:292px;height:600px;border-radius:16px;box-shadow:inset 1px 1px 0 rgba(255,255,255,0.10)"></div></div>
<div class="a" style="left:359px;top:209.5px;width:5.3px;height:96px;background:#222324;border-radius:0 3px 3px 0"></div>
<div class="a" style="left:359px;top:317px;width:5.3px;height:55px;background:#222324;border-radius:0 3px 3px 0"></div>
<div class="a" style="left:77.6px;top:113.4px;width:270.6px;height:600px;border-radius:5px;background:#ffffff"></div>
<div class="a" style="left:77.6px;top:181px;width:270.6px;height:1px;background:#f29b96"></div>
<div class="a" style="left:77.6px;top:219px;width:270.6px;height:1px;background:#dc1c1c"></div>
<div class="a" style="left:77.6px;top:257px;width:270.6px;height:1px;background:#dc1c1c"></div>
<div class="a" style="left:77.6px;top:295px;width:270.6px;height:1px;background:#f29b96"></div>
<div class="a" style="left:77.6px;top:334px;width:270.6px;height:1px;background:#f29b96"></div>
</div>
<span class="t" style="left:1027.4px;top:274.4px;font-size:12.5px;color:#36444e;transform-origin:0 50%;transform:scaleX(0.8);">0</span>
<span class="t" style="left:1027.4px;top:312.6px;font-size:12.5px;color:#36444e;transform-origin:0 50%;transform:scaleX(0.8);">1</span>
<span class="t" style="left:1027.4px;top:350.9px;font-size:12.5px;color:#36444e;transform-origin:0 50%;transform:scaleX(0.8);">2</span>
<span class="t" style="left:1027.4px;top:389.1px;font-size:12.5px;color:#36444e;transform-origin:0 50%;transform:scaleX(0.8);">3</span>
<span class="t" style="left:1027.4px;top:427.4px;font-size:12.5px;color:#36444e;transform-origin:0 50%;transform:scaleX(0.8);">4</span>
<span class="t" style="left:1027.4px;top:465.6px;font-size:12.5px;color:#36444e;transform-origin:0 50%;transform:scaleX(0.8);">5</span>
<span class="t" style="left:27.8px;top:636.5px;font-size:12px;letter-spacing:-0.27px;">日志:</span>
<span class="t" style="left:74.4px;top:636.5px;transform-origin:0 0;transform:scaleX(1.0459);font-size:12px;">HiLog</span>
<div class="a" style="left:61.7px;top:655px;width:58.3px;height:3px;background:#7a8088;border-radius:1.5px;"></div>
<span class="t" style="left:132.5px;top:636.5px;transform-origin:0 0;transform:scaleX(1.0299);font-size:12px;">FaultLog</span>
<span class="t" style="left:205.4px;top:636.5px;transform-origin:0 0;transform:scaleX(1.0317);font-size:12px;">AnalyzeStackTrace</span>
<svg style="left:1315.6px;top:638.2px" width="12.6" height="12.6" viewBox="-6.5 -6.5 13 13"><path d="M-1.92 -4.29L-1.71 -6.17L1.71 -6.17L1.92 -4.29L2.76 -3.81L4.49 -4.56L6.20 -1.61L4.67 -0.49L4.67 0.49L6.20 1.61L4.49 4.56L2.76 3.81L1.92 4.29L1.71 6.17L-1.71 6.17L-1.92 4.29L-2.76 3.81L-4.49 4.56L-6.20 1.61L-4.67 0.49L-4.67 -0.49L-6.20 -1.61L-4.49 -4.56L-2.76 -3.81Z" fill="#bfc1c3" stroke="#bfc1c3" stroke-width="0.6" stroke-linejoin="round"/><circle r="2.5" fill="#3c3f41"/></svg>
<div class="a" style="left:1341.6px;top:643.2px;width:12.8px;height:2px;background:#b4b6b8;"></div>
<svg style="left:32px;top:664.5px" width="12" height="12" viewBox="0 0 12 12" stroke="#c6c8ca" stroke-width="1.9"><path d="M6 0.3V11.7M0.3 6H11.7"/></svg>
<span class="t" style="left:51.6px;top:662.5px;font-size:12px;letter-spacing:0.28px;">新增</span>
<svg style="left:93px;top:665px" width="12" height="12" viewBox="0 0 12 12" fill="#afb1b3"><rect x="0" y="0" width="5" height="5"/><rect x="6.6" y="0" width="5" height="5"/><rect x="0" y="6.6" width="5" height="5"/><rect x="6.6" y="6.6" width="5" height="5"/></svg>
<span class="t" style="left:112.3px;top:662.5px;font-size:12px;letter-spacing:0.28px;">布局</span>
<svg style="left:153.3px;top:663.8px" width="13.6" height="13.6" viewBox="-6.5 -6.5 13 13"><path d="M-1.57 -4.43L-1.21 -6.28L1.21 -6.28L1.57 -4.43L2.02 -4.24L3.59 -5.30L5.30 -3.59L4.24 -2.02L4.43 -1.57L6.28 -1.21L6.28 1.21L4.43 1.57L4.24 2.02L5.30 3.59L3.59 5.30L2.02 4.24L1.57 4.43L1.21 6.28L-1.21 6.28L-1.57 4.43L-2.02 4.24L-3.59 5.30L-5.30 3.59L-4.24 2.02L-4.43 1.57L-6.28 1.21L-6.28 -1.21L-4.43 -1.57L-4.24 -2.02L-5.30 -3.59L-3.59 -5.30L-2.02 -4.24Z" fill="#bfc1c3" stroke="#bfc1c3" stroke-width="0.6" stroke-linejoin="round"/><circle r="2.8" fill="#3c3f41"/></svg>
<span class="t" style="left:174.5px;top:662.5px;font-size:12px;letter-spacing:-0.22px;">设置</span>
<div class="a" style="left:31px;top:693px;width:249px;height:25.5px;border:1px solid #646464;border-radius:3px;background:#3c3f41"></div>
<svg style="left:43px;top:698.5px" width="8" height="13" viewBox="0 0 8 13"><rect x="0" y="0" width="8" height="13" rx="1.2" fill="#c4c6c8"/><rect x="1.4" y="2" width="5.2" height="8" fill="#3c3f41"/></svg>
<span class="t" style="left:61.7px;top:699.3px;transform-origin:0 0;transform:scaleX(1.0757);font-size:12px;">phone</span>
<svg style="left:264px;top:703.5px" width="9.6" height="5.6" viewBox="0 0 10 6"><path d="M0 0H10L5 6Z" fill="#afb1b3"/></svg>
<div class="a" style="left:292px;top:693px;width:182px;height:25.5px;border:1px solid #646464;border-radius:3px;background:#3c3f41"></div>
<span class="t" style="left:298.4px;top:699.3px;transform-origin:0 0;transform:scaleX(1.1216);font-size:12px;">No filters</span>
<svg style="left:456.8px;top:703.5px" width="9.6" height="5.6" viewBox="0 0 10 6"><path d="M0 0H10L5 6Z" fill="#afb1b3"/></svg>
<div class="a" style="left:486px;top:693px;width:182px;height:25.5px;border:1px solid #555759;border-radius:3px;background:#3c3f41"></div>
<svg style="left:651.5px;top:703.5px" width="9.6" height="5.6" viewBox="0 0 10 6"><path d="M0 0H10L5 6Z" fill="#585b5d"/></svg>
<div class="a" style="left:679px;top:693px;width:81.5px;height:25.5px;border:1px solid #646464;border-radius:3px;background:#3c3f41"></div>
<span class="t" style="left:686.5px;top:699.3px;transform-origin:0 0;transform:scaleX(1.0742);font-size:12px;">Debug</span>
<svg style="left:743.7px;top:703.5px" width="9.6" height="5.6" viewBox="0 0 10 6"><path d="M0 0H10L5 6Z" fill="#afb1b3"/></svg>
<div class="a" style="left:772px;top:693px;width:512px;height:25.5px;border:1px solid #646464;border-radius:3px;background:#45494a"></div>
<svg style="left:778.5px;top:699px" width="16" height="13" viewBox="0 0 16 13" fill="none" stroke="#9a9da0" stroke-width="1.2"><circle cx="5" cy="5.4" r="4.2"/><path d="M8 8.6L11.4 12.2"/><path d="M11.4 5.4H15.4L13.4 7.8Z" fill="#9a9da0" stroke="none"/></svg>
<span class="t" style="left:1295px;top:699.3px;transform-origin:0 0;transform:scaleX(0.9906);font-size:12px;color:#5e6164;font-weight:bold;">Cc</span>
<span class="t" style="left:1322.3px;top:698.3px;font-size:14px;letter-spacing:1.36px;color:#5e6164;font-weight:bold;">.*</span>
<svg style="left:30px;top:740px" width="12.4" height="6.4" viewBox="0 0 12 6"><path d="M0 6H12L6 0Z" fill="#afb1b3"/></svg>
<svg style="left:30px;top:765.6px" width="12.4" height="6.4" viewBox="0 0 12 6"><path d="M0 0H12L6 6Z" fill="#afb1b3"/></svg>
<svg style="left:30px;top:788.5px" width="14" height="14" viewBox="0 0 14 14" fill="none" stroke="#b8babc" stroke-width="1.9"><path d="M0.5 1.2H13.5M0.5 6.2H10.6C12.6 6.2 13.2 7.4 13.2 8.6C13.2 9.8 12.6 11 10.6 11H7"/><path d="M0.5 11H3.4"/><path d="M8.4 8.2L5.4 11L8.4 13.8Z" fill="#afb1b3" stroke="none"/></svg>
<div class="a" style="left:25px;top:810px;width:22px;height:22px;background:#5c6164;border-radius:3px"></div>
<svg style="left:30px;top:814px" width="13" height="13" viewBox="0 0 13 13" fill="none" stroke="#d7d9db" stroke-width="1.9"><path d="M0 1.6H4.6M0 5.6H4.6M0 11.6H13"/><path d="M9 0V6.4"/><path d="M5.8 4.8H12.2L9 8.8Z" fill="#d7d9db" stroke="none"/></svg>
<svg style="left:30px;top:840.5px" width="14" height="15" viewBox="0 0 14 15" fill="none"><path d="M9.6 3.4A5 5 0 1 0 10.8 10.4" stroke="#499c54" stroke-width="1.7"/><path d="M8 0L13.2 3.4L8 6.6Z" fill="#499c54"/><rect x="7.4" y="8.6" width="5.2" height="5.2" fill="#afb1b3"/></svg>
<span class="t" style="left:33.2px;top:879px;font-size:12px;color:#8f9294;">»</span>
<div class="a" style="left:286px;top:898px;width:57px;height:21.5px;background:#2d2f30;"></div>
<span class="t" style="left:49.2px;top:901.5px;font-size:11px;">版本控制</span>
<span class="t" style="left:130.5px;top:901.5px;transform-origin:0 0;transform:scaleX(1.026);font-size:11px;">TODO</span>
<span class="t" style="left:198.4px;top:901.5px;font-size:11px;">问题</span>
<span class="t" style="left:255.0px;top:901.5px;font-size:11px;">终端</span>
<span class="t" style="left:313.2px;top:901.5px;font-size:11px;color:#ffffff;">日志</span>
<span class="t" style="left:376.8px;top:901.5px;transform-origin:0 0;transform:scaleX(1.0816);font-size:11px;">Operation Analyzer</span>
<span class="t" style="left:521px;top:901.5px;transform-origin:0 0;transform:scaleX(1.0877);font-size:11px;">Profiler</span>
<span class="t" style="left:597.9px;top:901.5px;transform-origin:0 0;transform:scaleX(1.0497);font-size:11px;">Code Linter</span>
<span class="t" style="left:702.7px;top:901.5px;transform-origin:0 0;transform:scaleX(1.0756);font-size:11px;">Migrate Assistant</span>
<span class="t" style="left:831.3px;top:901.5px;font-size:11px;">服务</span>
<span class="t" style="left:888.5px;top:901.5px;font-size:11px;">构建</span>
<span class="t" style="left:950.1px;top:901.5px;transform-origin:0 0;transform:scaleX(1.0671);font-size:11px;">ArkUI Inspector</span>
<span class="t" style="left:1069.5px;top:901.5px;font-size:11px;">预览器日志</span>
<svg style="left:35px;top:903.4px" width="9.2" height="12" viewBox="0 0 9.2 12" fill="#cfd1d2" stroke="#cfd1d2"><circle cx="1.9" cy="1.9" r="1.8" stroke="none"/><circle cx="1.9" cy="10.1" r="1.8" stroke="none"/><circle cx="7.1" cy="4.5" r="1.8" stroke="none"/><path d="M1.9 1.9V10.1" stroke-width="1.7" fill="none"/><path d="M7.1 4.5C7.1 7.4 5 8 1.9 8.8" stroke-width="1.5" fill="none"/></svg>
<svg style="left:115px;top:904.5px" width="11" height="10" viewBox="0 0 11 10" fill="#afb1b3"><rect x="0" y="0.4" width="2" height="1.8"/><rect x="3.2" y="0.4" width="7.8" height="1.8"/><rect x="0" y="4.1" width="2" height="1.8"/><rect x="3.2" y="4.1" width="7.8" height="1.8"/><rect x="0" y="7.8" width="2" height="1.8"/><rect x="3.2" y="7.8" width="7.8" height="1.8"/></svg>
<svg style="left:183px;top:904px" width="11" height="11" viewBox="0 0 11 11"><circle cx="5.5" cy="5.5" r="5.5" fill="#db5c5c"/><path d="M5.5 2.2V6.2M5.5 7.4V8.9" stroke="#3c3f41" stroke-width="1.7"/></svg>
<svg style="left:239.5px;top:904px" width="12" height="11" viewBox="0 0 12 11"><rect width="12" height="11" fill="#afb1b3"/><path d="M2 2.4L5.4 5.2L2 8" fill="none" stroke="#3c3f41" stroke-width="1.4"/><path d="M6 8.4H10" stroke="#3c3f41" stroke-width="1.4"/></svg>
<svg style="left:296px;top:903.5px" width="12" height="12" viewBox="0 0 12 12"><rect x="0" y="1.6" width="12" height="10.4" fill="#e0e1e2"/><rect x="1.6" y="0" width="1.8" height="2.4" fill="#e0e1e2"/><rect x="8.6" y="0" width="1.8" height="2.4" fill="#e0e1e2"/><path d="M2.2 5H9.8M2.2 7.4H9.8M2.2 9.8H7" stroke="#2d2f30" stroke-width="1.2"/></svg>
<svg style="left:358px;top:903px" width="14" height="12" viewBox="0 0 14 12" fill="none" stroke="#afb1b3" stroke-width="1.2"><path d="M0.6 0V11.4H14"/><path d="M2.6 8.6L6 4.4L8.4 6.8L12.4 2"/></svg>
<svg style="left:502px;top:903px" width="14" height="13" viewBox="0 0 14 13" fill="#afb1b3"><path d="M0.4 3.2L13.6 0.4L9.4 5.4L7.4 12.6L6 7.2L3.4 9.8L4 5.8Z"/></svg>
<svg style="left:580px;top:903px" width="13" height="13" viewBox="0 0 13 13" fill="none" stroke="#afb1b3"><circle cx="5.6" cy="5.6" r="4.6" stroke-width="1.7"/><path d="M9 9L12.4 12.4" stroke-width="2"/><path d="M3.4 5.8L5 7.4L8 4" stroke-width="1.3"/></svg>
<svg style="left:683px;top:904px" width="14" height="11" viewBox="0 0 14 11"><path d="M0 0H5L6.2 1.6H14V11H0Z" fill="#afb1b3"/><path d="M3.4 6.4H9.4M7.4 4L9.8 6.4L7.4 8.8" fill="none" stroke="#3c3f41" stroke-width="1.3"/></svg>
<svg style="left:814.5px;top:903.5px" width="12" height="12" viewBox="0 0 12 12"><circle cx="6" cy="6" r="6" fill="#afb1b3"/><path d="M4.6 3.4L8.6 6L4.6 8.6Z" fill="#3c3f41"/></svg>
<svg style="left:872px;top:903px" width="13" height="13" viewBox="0 0 13 13" fill="none" stroke="#afb1b3"><path d="M5.4 4.6L12 11.6" stroke-width="2"/><path d="M1 5.6L5 1.4L8.2 3.2" stroke-width="2.4"/></svg>
<svg style="left:933px;top:904px" width="12" height="11" viewBox="0 0 12 11" fill="#afb1b3"><rect x="0" y="0" width="12" height="2.8"/><rect x="0" y="4" width="3.4" height="7"/><rect x="4.6" y="4" width="7.4" height="7"/><rect x="5.8" y="5.2" width="5" height="1.6" fill="#3c3f41"/></svg>
<svg style="left:1053px;top:903.5px" width="11" height="12" viewBox="0 0 11 12" fill="none" stroke="#9a9da0" stroke-width="1"><rect x="0.5" y="1" width="10" height="10.5"/><path d="M3 0V2.2M8 0V2.2M2.6 4.6H8.4M2.6 6.8H8.4M2.6 9H6.4"/></svg>
<svg style="left:12px;top:924.3px" width="13" height="13" viewBox="0 0 13 13" fill="none" stroke="#c6c8ca" stroke-width="1.3"><rect x="2.7" y="0.65" width="9.4" height="9.4"/><path d="M0.65 2.6V12.1H10"/></svg>
<span class="t" style="left:38.7px;top:922.5px;transform-origin:0 0;transform:scaleX(1.0887);font-size:12px;">Sync project finished in 14 s 219 ms (today 11:00)</span>
<svg style="left:1092px;top:923px" width="16" height="16" viewBox="0 0 13 13"><path d="M4.2 0.6L8.6 0.3L11.6 2.2L12.7 6.9L10.6 10.6L6.9 12.8L3.2 11.8L0.6 8.2L0.4 4.4Z" fill="#e2e3e4" stroke="#e2e3e4" stroke-width="0.8" stroke-linejoin="round"/><path d="M2.6 4.2L6.4 11.4M4.4 3.7H10.8M10.6 6.4L7.2 11.6" fill="none" stroke="#3c3f41" stroke-width="1"/><path d="M4.4 3.7V2.2M10.8 6.6L11.8 7.6M4.6 10.6L3 11" fill="none" stroke="#3c3f41" stroke-width="0.8"/></svg>
<svg style="left:1120px;top:924.4px" width="12.6" height="12.6" viewBox="0 0 12 12"><circle cx="6" cy="6" r="6" fill="#2da037"/></svg>
<span class="t" style="left:1144.3px;top:922.5px;transform-origin:0 0;transform:scaleX(1.0089);font-size:12px;">28:13</span>
<span class="t" style="left:1187.3px;top:922.5px;transform-origin:0 0;transform:scaleX(0.8869);font-size:12px;">CRLF</span>
<span class="t" style="left:1227.2px;top:922.5px;transform-origin:0 0;transform:scaleX(0.9824);font-size:12px;">UTF-8</span>
<svg style="left:1273px;top:926.5px" width="13" height="9" viewBox="0 0 13 9"><path d="M0 4.5C2 1.4 4.2 0 6.5 0C8.8 0 11 1.4 13 4.5C11 7.6 8.8 9 6.5 9C4.2 9 2 7.6 0 4.5Z" fill="#afb1b3"/><circle cx="6.5" cy="4.5" r="2.5" fill="#3c3f41"/><circle cx="6.5" cy="4.5" r="1.1" fill="#afb1b3"/></svg>
<span class="t" style="left:1297px;top:922.5px;transform-origin:0 0;transform:scaleX(1.0535);font-size:12px;">2 spaces</span>
<svg style="left:1358.9px;top:924.9px" width="11.2" height="11.2" viewBox="0 0 11.2 11.2"><rect x="3" y="5.2" width="8.1" height="6" fill="#c6c8ca"/><path d="M0.8 5V3.2A2.4 2.4 0 0 1 5.6 3.2V5.4" fill="none" stroke="#c6c8ca" stroke-width="1.5"/></svg>
<span class="t" style="left:4px;top:87.4px;transform-origin:0 0;transform:rotate(-90deg);font-size:11px;letter-spacing:0.2px;">项目</span>
<svg style="left:6px;top:93px" width="12" height="9.5" viewBox="0 0 12 9.5"><path d="M0 0H4.6L6 1.6H12V9.5H0Z" fill="#afb1b3"/></svg>
<span class="t" style="left:4px;top:773.2px;transform-origin:0 0;transform:rotate(-90deg);font-size:11px;">结构</span>
<svg style="left:7px;top:779px" width="10" height="10" viewBox="0 0 10 10" fill="#afb1b3"><rect x="5.6" y="0" width="4.4" height="4.4"/><rect x="0" y="5.6" width="4.4" height="4.4"/><rect x="5.6" y="5.6" width="4.4" height="4.4"/></svg>
<span class="t" style="left:4.3px;top:867.5px;transform-origin:0 0;transform:rotate(-90deg) scaleX(1.0576);font-size:11px;">Bookmarks</span>
<svg style="left:7px;top:873px" width="9" height="11" viewBox="0 0 9 11"><path d="M0 0H9V11L4.5 7.6L0 11Z" fill="#afb1b3"/></svg>
<div class="a" style="left:1362px;top:429px;width:22px;height:68px;background:#2d2f30;"></div>
<svg style="left:1366.8px;top:68.6px" width="13" height="15" viewBox="0 0 13 15"><path d="M5.6 1.4C8.6 1.4 10 3.6 10 6.4V9.6L11.6 11.6H0L1.4 9.6V6.4C1.4 3.6 2.8 1.4 5.6 1.4Z" fill="#c4c6c8"/><rect x="4.2" y="12.6" width="3" height="1.8" fill="#c4c6c8"/><circle cx="10.6" cy="2.6" r="2.6" fill="#3d8ed6"/></svg>
<span class="t" style="left:1380.3px;top:86.6px;transform-origin:0 0;transform:rotate(90deg) scaleX(1.1165);font-size:11px;">Notifications</span>
<svg style="left:1366px;top:176px" width="13" height="13" viewBox="0 0 13 13"><path d="M4.2 0.6L8.6 0.3L11.6 2.2L12.7 6.9L10.6 10.6L6.9 12.8L3.2 11.8L0.6 8.2L0.4 4.4Z" fill="#e2e3e4" stroke="#e2e3e4" stroke-width="0.8" stroke-linejoin="round"/><path d="M2.6 4.2L6.4 11.4M4.4 3.7H10.8M10.6 6.4L7.2 11.6" fill="none" stroke="#3c3f41" stroke-width="1"/><path d="M4.4 3.7V2.2M10.8 6.6L11.8 7.6M4.6 10.6L3 11" fill="none" stroke="#3c3f41" stroke-width="0.8"/></svg>
<span class="t" style="left:1380.5px;top:193.1px;transform-origin:0 0;transform:rotate(90deg);font-size:11px;letter-spacing:-0.47px;">通义灵码</span>
<svg style="left:1366.9px;top:259.7px" width="11.4" height="11.5" viewBox="0 0 11.4 11.5"><rect width="11.4" height="11.5" fill="#c8c9ca"/><path d="M1.6 1.9H9.8" stroke="#3c3f41" stroke-width="1.1"/><path d="M3.4 8.8C4.6 8.4 5 7 5.6 5M5 7.4C6 7.8 7.4 7.6 7.8 6.4" fill="none" stroke="#3c3f41" stroke-width="1.1"/></svg>
<span class="t" style="left:1380.3px;top:277px;transform-origin:0 0;transform:rotate(90deg) scaleX(1.0347);font-size:11px;">Kit Assistant</span>
<svg style="left:1366.9px;top:361.9px" width="12.4" height="13.2" viewBox="0 0 12.4 13.2"><path d="M1.8 0H10.4V3.2H4V13H0V1.8Z" fill="#c8c9ca"/><path d="M3.2 6.2H12.2L11.2 10L7.7 13L4.2 10Z" fill="#c8c9ca" stroke="#3c3f41" stroke-width="0.9"/><path d="M5.8 5.2V7M9.6 5.2V7" stroke="#c8c9ca" stroke-width="1.5"/><path d="M6 8.4H9.4L7.7 10.4Z" fill="#3c3f41"/></svg>
<span class="t" style="left:1380.5px;top:378.7px;transform-origin:0 0;transform:rotate(90deg);font-size:11px;letter-spacing:0.22px;">API参考</span>
<svg style="left:1366.5px;top:439px" width="12" height="9" viewBox="0 0 13 9"><path d="M0 4.5C2 1.4 4.2 0 6.5 0C8.8 0 11 1.4 13 4.5C11 7.6 8.8 9 6.5 9C4.2 9 2 7.6 0 4.5Z" fill="#e0e1e2"/><circle cx="6.5" cy="4.5" r="2.5" fill="#2d2f30"/><circle cx="6.5" cy="4.5" r="1.1" fill="#e0e1e2"/></svg>
<span class="t" style="left:1380.5px;top:455.2px;transform-origin:0 0;transform:rotate(90deg);font-size:11px;letter-spacing:-0.4px;color:#ffffff;">预览器</span>
<svg style="left:1367.9px;top:764.8px" width="8.1" height="12.2" viewBox="0 0 8.1 12.2"><rect x="0" y="0" width="8.1" height="12.2" rx="1.4" fill="#9cd0c6"/><rect x="1.3" y="2.2" width="5.5" height="7.8" fill="#3c3f41"/></svg>
<span class="t" style="left:1380.3px;top:783.4px;transform-origin:0 0;transform:rotate(90deg) scaleX(1.0275);font-size:11px;">Device File Browser</span>
<div class="a" style="left:0px;top:0px;width:1384px;height:1px;background:#46494b;"></div>
<svg style="left:0;top:0" width="6" height="6" viewBox="0 0 6 6"><path d="M0 0H6A6 6 0 0 0 0 6Z" fill="#0f0f0f"/></svg>
<svg style="left:1377px;top:0" width="7" height="7" viewBox="0 0 7 7"><path d="M7 0H0A7 7 0 0 1 7 7Z" fill="#17120f"/></svg>
<svg style="left:0;top:936px" width="5" height="5" viewBox="0 0 5 5"><path d="M0 5H5A5 5 0 0 1 0 0Z" fill="#17120f"/></svg>
<svg style="left:1380px;top:937px" width="4" height="4" viewBox="0 0 4 4"><path d="M4 4H0A4 4 0 0 0 4 0Z" fill="#2a2624"/></svg>
</body>
</html>
